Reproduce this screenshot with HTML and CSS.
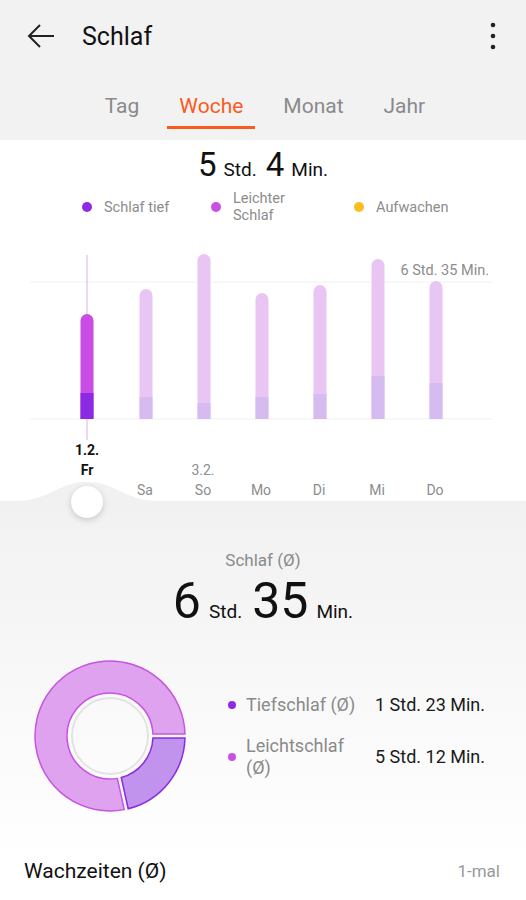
FILE: index.html
```html
<!DOCTYPE html>
<html lang="de">
<head>
    <meta charset="UTF-8">
    <meta name="viewport" content="width=device-width, initial-scale=1.0">
    <title>Schlaf</title>
    <link rel="stylesheet" href="styles.css">
</head>
<body>

<div class="top">
    <div class="appbar">
        <svg class="back" width="28" height="26" viewBox="0 0 28 26">
            <path d="M27 13H2M13 2L2 13L13 24" fill="none" stroke="#222" stroke-width="2"/>
        </svg>
        <div class="title">Schlaf</div>
        <svg class="more" width="6" height="28" viewBox="0 0 6 28">
            <circle cx="3" cy="3" r="2.3" fill="#222"/>
            <circle cx="3" cy="14" r="2.3" fill="#222"/>
            <circle cx="3" cy="25" r="2.3" fill="#222"/>
        </svg>
    </div>
    <div class="tabs">
        <div class="tab">Tag</div>
        <div class="tab active">Woche</div>
        <div class="tab">Monat</div>
        <div class="tab">Jahr</div>
    </div>
</div>

<div class="week">
    <div class="total">
        <span class="num">5</span><span class="unit">Std.</span><span class="num">4</span><span class="unit last">Min.</span>
    </div>
    <div class="legend">
        <div class="legend-item"><i class="dot deep"></i><span>Schlaf tief</span></div>
        <div class="legend-item"><i class="dot light"></i><span>Leichter<br>Schlaf</span></div>
        <div class="legend-item"><i class="dot wake"></i><span>Aufwachen</span></div>
    </div>

    <svg class="chart" width="526" height="200" viewBox="0 0 526 200">
        <line x1="30" y1="42" x2="492" y2="42" stroke="#f0f0f0"/>
        <line x1="30" y1="179" x2="492" y2="179" stroke="#f0f0f0"/>
        <line x1="87" y1="15" x2="87" y2="200" stroke="#dcb0ef"/>
        <text x="489" y="35" text-anchor="end" class="max-label">6 Std. 35 Min.</text>

        <!-- Fr (ausgewählt) -->
        <path d="M80.5 179V80.5a6.5 6.5 0 0 1 13 0V179Z" fill="#c94de4"/>
        <rect x="80.5" y="153" width="13" height="26" fill="#8c2ae2"/>
        <!-- Sa -->
        <path d="M139.5 179V55.5a6.5 6.5 0 0 1 13 0V179Z" fill="#e9c5f3"/>
        <rect x="139.5" y="157" width="13" height="22" fill="#d6bbf1"/>
        <!-- So -->
        <path d="M197.5 179V20.5a6.5 6.5 0 0 1 13 0V179Z" fill="#e9c5f3"/>
        <rect x="197.5" y="163" width="13" height="16" fill="#d6bbf1"/>
        <!-- Mo -->
        <path d="M255.5 179V59.5a6.5 6.5 0 0 1 13 0V179Z" fill="#e9c5f3"/>
        <rect x="255.5" y="157" width="13" height="22" fill="#d6bbf1"/>
        <!-- Di -->
        <path d="M313.5 179V51.5a6.5 6.5 0 0 1 13 0V179Z" fill="#e9c5f3"/>
        <rect x="313.5" y="154" width="13" height="25" fill="#d6bbf1"/>
        <!-- Mi -->
        <path d="M371.5 179V25.5a6.5 6.5 0 0 1 13 0V179Z" fill="#e9c5f3"/>
        <rect x="371.5" y="136" width="13" height="43" fill="#d6bbf1"/>
        <!-- Do -->
        <path d="M429.5 179V47.5a6.5 6.5 0 0 1 13 0V179Z" fill="#e9c5f3"/>
        <rect x="429.5" y="143" width="13" height="36" fill="#d6bbf1"/>
    </svg>

    <div class="days">
        <div class="day selected"><span>1.2.</span><span>Fr</span><span></span></div>
        <div class="day"><span></span><span></span><span>Sa</span></div>
        <div class="day"><span></span><span>3.2.</span><span>So</span></div>
        <div class="day"><span></span><span></span><span>Mo</span></div>
        <div class="day"><span></span><span></span><span>Di</span></div>
        <div class="day"><span></span><span></span><span>Mi</span></div>
        <div class="day"><span></span><span></span><span>Do</span></div>
    </div>

    <svg class="bump" width="150" height="20" viewBox="0 0 150 20">
        <path d="M0 20C35 20 42 1 72 1S109 20 144 20Z" fill="#f1f1f1"/>
    </svg>
    <div class="knob"></div>
</div>

<div class="stats">
    <div class="avg-label">Schlaf (Ø)</div>
    <div class="avg">
        <span class="num">6</span><span class="unit">Std.</span><span class="num">35</span><span class="unit last">Min.</span>
    </div>

    <div class="breakdown">
        <svg class="donut" width="160" height="160" viewBox="0 0 160 160">
            <circle cx="80" cy="80" r="38" fill="none" stroke="#e3e3e3" stroke-width="2"/>
            <path d="M94.27 153.63A75 75 0 1 1 154.97 78L122.95 78A43 43 0 1 0 87.34 122.37Z" fill="#dea2ee" stroke="#c754e1" stroke-width="1.5"/>
            <path d="M154.97 82A75 75 0 0 1 98.18 152.77L91.25 121.5A43 43 0 0 0 122.95 82Z" fill="#c193ed" stroke="#8a2be2" stroke-width="1.5"/>
        </svg>
        <div class="breakdown-list">
            <i class="dot deep small"></i>
            <div class="b-label">Tiefschlaf (Ø)</div>
            <div class="b-value">1 Std. 23 Min.</div>
            <i class="dot light small"></i>
            <div class="b-label">Leichtschlaf (Ø)</div>
            <div class="b-value">5 Std. 12 Min.</div>
        </div>
    </div>

    <div class="wake-row">
        <div class="wake-title">Wachzeiten (Ø)</div>
        <div class="wake-value">1-mal</div>
    </div>
</div>

</body>
</html>
```

FILE: styles.css
```css
body {
    margin: 0;
    width: 526px;
    height: 900px;
    overflow: hidden;
    font-family: Roboto, "Liberation Sans", sans-serif;
    color: #1a1a1a;
    background: #f1f1f1;
}
.top {
    background-color: #f2f2f2;
    padding-bottom: 11px;
}
.appbar {
    height: 72px;
    display: flex;
    align-items: center;
    padding: 0 30px 0 27px;
}
.back {
    margin-right: 27px;
}
.title {
    flex: 1;
    font-size: 25px;
    color: #111;
}
.tabs {
    display: flex;
    justify-content: center;
    gap: 16px;
    padding-left: 4px;
}
.tab {
    padding: 20px 12px 6px;
    line-height: 28px;
    font-size: 21px;
    color: #8a8a8a;
    border-bottom: 3px solid transparent;
}
.tab.active {
    color: #fb5a1e;
    border-bottom-color: #fb5a1e;
}

/* Woche */
.week {
    background: white;
    position: relative; /* für Knopf und Wölbung */
    height: 361px;
}
.total {
    padding-top: 5px;
    height: 40px;
    line-height: 40px;
    text-align: center;
    color: #111;
}
.total .num {
    font-size: 33px;
    margin-right: 7px;
}
.total .unit {
    font-size: 19px;
    margin-right: 9px;
}
.total .unit.last {
    margin-right: 0;
}
.legend {
    display: grid;
    grid-template-columns: 129px 143px auto;
    padding: 5px 0 0 82px;
    height: 55px;
    box-sizing: border-box;
}
.legend-item {
    display: flex;
    align-items: center;
    height: 34px;
    font-size: 14.5px;
    line-height: 17px;
    color: #8c8c8c;
}
.dot {
    width: 10px;
    height: 10px;
    border-radius: 50%;
    margin-right: 12px;
    flex-shrink: 0;
}
.dot.deep { background: #8d2ae3; }
.dot.light { background: #cc4fe5; }
.dot.wake { background: #fbbd1e; }
.chart {
    display: block;
}
.max-label {
    font-family: Roboto, "Liberation Sans", sans-serif;
    font-size: 14.5px;
    fill: #8c8c8c;
}
.days {
    display: flex;
    padding-left: 58px;
}
.day {
    width: 58px;
    display: flex;
    flex-direction: column;
    align-items: center;
    font-size: 14px;
    color: #8c8c8c;
}
.day span {
    height: 20px;
    line-height: 20px;
}
.day.selected {
    color: #111;
    font-weight: bold;
}
.bump {
    position: absolute;
    left: 15px;
    bottom: 0;
}
.knob {
    position: absolute;
    left: 71px;
    top: 346px;
    width: 32px;
    height: 32px;
    border-radius: 50%;
    background: white;
    box-shadow: 0 2px 6px rgba(0, 0, 0, 0.18);
}

/* Durchschnitt */
.stats {
    height: 399px;
    background: linear-gradient(#f1f1f1, #ffffff 90%);
    padding-top: 48px;
    box-sizing: border-box;
}
.avg-label {
    text-align: center;
    font-size: 17px;
    line-height: 22px;
    color: #8a8a8a;
}
.avg {
    margin-top: 2px;
    height: 56px;
    text-align: center;
    line-height: 56px;
    color: #111;
}
.avg .num {
    font-size: 50px;
    margin-right: 8px;
}
.avg .unit {
    font-size: 19px;
    margin-right: 10px;
}
.avg .unit.last {
    margin-right: 0;
}
.breakdown {
    display: flex;
    align-items: center;
    margin-top: 27px;
}
.donut {
    margin-left: 30px;
}
.breakdown-list {
    margin-left: 38px;
    display: grid;
    grid-template-columns: 8px 119px auto;
    column-gap: 10px;
    row-gap: 19px;
    align-items: center;
    font-size: 18px;
    line-height: 22px;
}
.dot.small {
    width: 8px;
    height: 8px;
    margin: 0;
}
.b-label {
    color: #8a8a8a;
}
.b-value {
    color: #1a1a1a;
}
.wake-row {
    display: flex;
    justify-content: space-between;
    align-items: center;
    margin-top: 41px;
    padding: 0 26px 0 24px;
    line-height: 28px;
}
.wake-title {
    font-size: 21px;
    color: #111;
}
.wake-value {
    font-size: 17px;
    color: #999;
}
```
